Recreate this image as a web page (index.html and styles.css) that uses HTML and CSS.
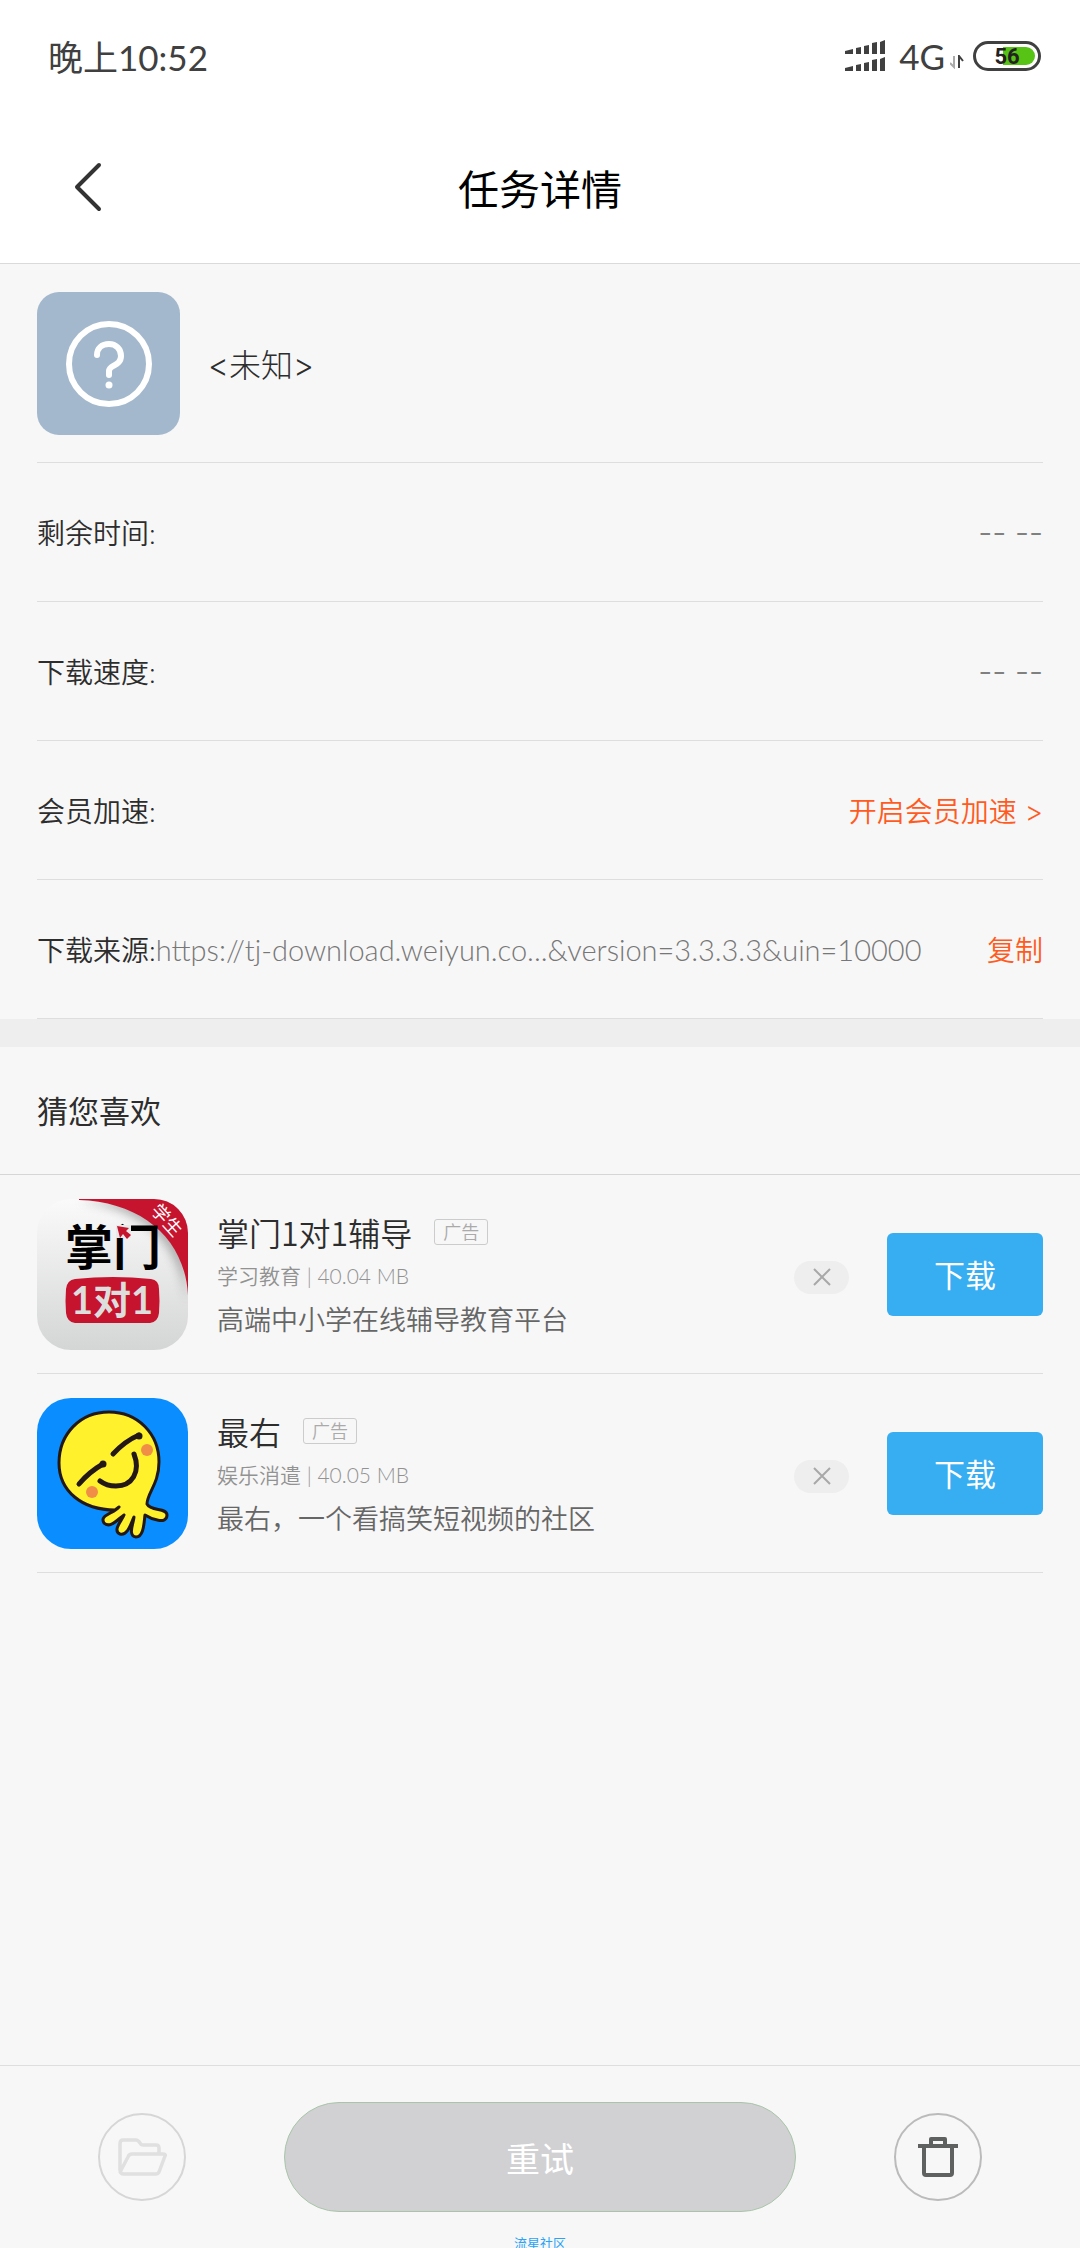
FILE: index.html
```html
<!DOCTYPE html>
<html lang="zh-CN">
<head>
    <meta charset="UTF-8">
    <meta name="viewport" content="width=device-width, initial-scale=1.0">
    <title>任务详情</title>
    <link rel="stylesheet" href="styles.css">
</head>
<body>
    <div class="status-bar">
        <span class="time">晚上10:52</span>
        <div class="status-icons">
            <svg class="signal" width="41" height="32" viewBox="0 0 41 32" fill="#404040">
                <path d="M0 11l8-2v5H0zM11 8l5-1v7h-5zM19 6l5-1v9h-5zM27 3l5-1v12h-5zM35 2l5-2v14h-5z"/>
                <path d="M0 28l8-2v5H0zM11 25l5-1v7h-5zM19 23l5-1v9h-5zM27 20l5-1v12h-5zM35 19l5-2v14h-5z"/>
            </svg>
            <span class="network">4G</span>
            <svg class="arrows" width="14" height="14" viewBox="0 0 14 14" fill="none" stroke-width="2">
                <path d="M4 1v11L0 8" stroke="#aaa"/>
                <path d="M9 13V1l4 5" stroke="#404040"/>
            </svg>
            <svg class="battery" width="68" height="30" viewBox="0 0 68 30">
                <rect x="1.5" y="1.5" width="65" height="27" rx="13.5" fill="#fff" stroke="#404040" stroke-width="3"/>
                <path d="M30 6h23a9 9 0 0 1 0 18H30z" fill="#57c314"/>
                <text x="34" y="23" text-anchor="middle">56</text>
            </svg>
        </div>
    </div>
    <header class="header">
        <button class="back" aria-label="返回">
            <svg width="28" height="50" viewBox="0 0 28 50" fill="none" stroke="#333" stroke-width="4" stroke-linecap="round" stroke-linejoin="round">
                <path d="M25 3L3 25l22 22"/>
            </svg>
        </button>
        <h1>任务详情</h1>
    </header>

    <main>
        <section class="details">
            <div class="file">
                <svg width="143" height="143" viewBox="0 0 143 143" fill="none" stroke="#fff" stroke-linecap="round">
                    <rect width="143" height="143" rx="22" fill="#a3b8cc" stroke="none"/>
                    <circle cx="72" cy="72" r="40" stroke-width="6"/>
                    <path d="M60 63c0-7 5-11 12-11s12 5 12 12c0 10-12 9-12 15v4" stroke-width="6"/>
                    <circle cx="72" cy="93" r="3.5" fill="#fff" stroke="none"/>
                </svg>
                <span class="file-name">&lt;未知&gt;</span>
            </div>
            <div class="row">
                <span class="label">剩余时间:</span>
                <span class="value">-- --</span>
            </div>
            <div class="row">
                <span class="label">下载速度:</span>
                <span class="value">-- --</span>
            </div>
            <div class="row">
                <span class="label">会员加速:</span>
                <a href="#" class="link">开启会员加速 &gt;</a>
            </div>
            <div class="row">
                <span class="label">下载来源:</span>
                <span class="url">https://tj-download.weiyun.co...&amp;version=3.3.3.3&amp;uin=10000</span>
                <button class="link">复制</button>
            </div>
        </section>

        <h2 class="section-title">猜您喜欢</h2>
        <ul class="apps">
            <li class="app">
                <svg class="app-icon" width="151" height="151" viewBox="0 0 151 151">
                    <defs>
                        <linearGradient id="silver" x1="0" y1="0" x2="0" y2="1">
                            <stop offset="0" stop-color="#fafafa"/>
                            <stop offset="1" stop-color="#d4d6d5"/>
                        </linearGradient>
                        <filter id="shade" x="-20%" y="-20%" width="140%" height="140%">
                            <feGaussianBlur stdDeviation="5"/>
                        </filter>
                    </defs>
                    <rect width="151" height="151" fill="url(#silver)"/>
                    <path d="M42 3C100 8 142 40 149 103L151 0z" fill="#888" opacity=".6" filter="url(#shade)"/>
                    <path d="M42 1C105 3 148 40 151 96V0H42z" fill="#c6142f"/>
                    <text class="ribbon" x="0" y="0" transform="translate(113 12) rotate(48)">学生</text>
                    <text class="logo" x="76" y="66" text-anchor="middle">掌门</text>
                    <path d="M79 26h15v13H79z" fill="#e8e9e9"/>
                    <path d="M80 27l12 2-3 3 5 4-4 4-4-5-3 4z" fill="#c6142f"/>
                    <path d="M38 80q38-4 76 0 8 1 8 10 1 12 0 24-1 9-9 10H38q-8-1-9-10-1-12 0-24 1-9 9-10z" fill="#c6142f"/>
                    <text class="badge" x="75" y="115" text-anchor="middle">1对1</text>
                </svg>
                <div class="app-info">
                    <div class="app-title">
                        <h3>掌门1对1辅导</h3>
                        <span class="tag">广告</span>
                    </div>
                    <p class="meta">学习教育 | 40.04 MB</p>
                    <p class="desc">高端中小学在线辅导教育平台</p>
                </div>
                <button class="dismiss" aria-label="关闭">
                    <svg width="18" height="18" viewBox="0 0 18 18" stroke="#a8a8a8" stroke-width="2"><path d="M1 1l16 16M17 1L1 17"/></svg>
                </button>
                <button class="download">下载</button>
            </li>
            <li class="app">
                <svg class="app-icon" width="151" height="151" viewBox="0 0 151 151" stroke-linecap="round" stroke-linejoin="round">
                    <rect width="151" height="151" fill="#0a8eff"/>
                    <path d="M78 112C45 112 22 93 22 65 22 36 43 14 72 14s50 22 50 50c0 22-12 31-12 42 4 8 20 3 20 11 0 10-16 4-22 0-1 7-1 22-9 22-9-1-2-15-2-20-3 6-6 19-14 17-8-3 2-14 4-19-6 4-14 14-20 8-5-8 9-9 15-16z" fill="#fff22d" stroke="#231815" stroke-width="3"/>
                    <g fill="none" stroke="#231815" stroke-width="5">
                        <path d="M42 86q10-12 24-20M76 56q12-13 26-19"/>
                        <path d="M97 56c7 18-2 32-18 32-7 0-12-2-16-5"/>
                    </g>
                    <circle cx="66" cy="66" r="3.5" fill="#231815"/>
                    <circle cx="102" cy="38" r="3.5" fill="#231815"/>
                    <circle cx="55" cy="94" r="6" fill="#f08e48"/>
                    <circle cx="110" cy="52" r="6" fill="#f08e48"/>
                </svg>
                <div class="app-info">
                    <div class="app-title">
                        <h3>最右</h3>
                        <span class="tag">广告</span>
                    </div>
                    <p class="meta">娱乐消遣 | 40.05 MB</p>
                    <p class="desc">最右，一个看搞笑短视频的社区</p>
                </div>
                <button class="dismiss" aria-label="关闭">
                    <svg width="18" height="18" viewBox="0 0 18 18" stroke="#a8a8a8" stroke-width="2"><path d="M1 1l16 16M17 1L1 17"/></svg>
                </button>
                <button class="download">下载</button>
            </li>
        </ul>
    </main>

    <footer class="footer">
        <div class="actions">
            <button class="round" disabled aria-label="打开文件夹">
                <svg width="50" height="40" viewBox="0 0 50 40" fill="none" stroke="#e0e0e0" stroke-width="3.5" stroke-linejoin="round">
                    <path d="M42 17v-6q0-3-3-3H26q-2 0-3-2-2-3-4-3H6Q3 3 3 7v26q0 4 4 4h32q2 0 3-2l6-16q1-2-2-2H15q-3 0-4 3L3 35"/>
                </svg>
            </button>
            <button class="retry">重试</button>
            <button class="round delete" aria-label="删除">
                <svg width="40" height="40" viewBox="0 0 40 40" fill="none" stroke="#5f6060" stroke-width="4" stroke-linejoin="round">
                    <path d="M0 9h40M6 9v27q0 2 2 2h24q2 0 2-2V9M13 9V2h14v7"/>
                </svg>
            </button>
        </div>
        <a href="#" class="community">流星社区</a>
    </footer>
</body>
</html>
```
FILE: styles.css
```css
* {
    box-sizing: border-box;
}
body {
    display: flex;
    flex-direction: column;
    height: 100vh;
    margin: 0;
    overflow: hidden;
    background-color: #f7f7f7;
    color: #2d2d2d;
    font-family: Lato, 'Noto Sans CJK SC', sans-serif;
    font-weight: 350;
}
h1, h2, h3, p, ul {
    margin: 0;
    padding: 0;
    font-weight: inherit;
}
button {
    padding: 0;
    border: none;
    background: none;
    font: inherit;
    cursor: pointer;
}
svg {
    display: block;
    flex: none;
}
.status-bar {
    display: flex;
    align-items: center;
    justify-content: space-between;
    flex: none;
    height: 113px;
    padding: 0 39px 2px 48px;
    background-color: #fff;
    color: #404040;
}
.time {
    font-size: 35px;
    font-weight: 400;
}
.status-icons {
    display: flex;
    align-items: center;
}
.network {
    margin: 0 5px 0 13px;
    font-size: 35px;
    font-weight: 400;
}
.arrows {
    align-self: flex-end;
    margin: 0 9px 8px 0;
}
.battery text {
    fill: #222;
    font: 700 22px Roboto, sans-serif;
}
.header {
    display: grid;
    grid-template-columns: 102px 1fr 102px;
    align-items: center;
    flex: none;
    height: 151px;
    padding-bottom: 2px;
    background-color: #fff;
    border-bottom: 1px solid #dadada;
}
.back {
    justify-self: end;
}
h1 {
    color: #000;
    font-size: 41px;
    font-weight: 400;
    text-align: center;
}
main {
    flex: 1;
}
.details {
    padding: 0 37px;
    border-bottom: 28px solid #eee;
}
.file {
    display: flex;
    align-items: center;
    gap: 28px;
    height: 199px;
    border-bottom: 1px solid #dedede;
}
.file-name {
    font-family: Inter, 'Noto Sans CJK SC', sans-serif;
    font-size: 32px;
    font-weight: 300;
}
.row {
    display: flex;
    align-items: center;
    height: 139px;
    border-bottom: 1px solid #dedede;
    font-size: 28px;
}
.value, .link {
    margin-left: auto;
}
.value {
    color: #808080;
    font-family: Inter, sans-serif;
    font-size: 31px;
}
.url {
    color: #777;
    font-size: 29px;
}
.link {
    color: #ff5b1f;
    font-family: Inter, 'Noto Sans CJK SC', sans-serif;
    text-decoration: none;
}
.section-title {
    height: 128px;
    padding-left: 37px;
    border-bottom: 1px solid #d6d6d6;
    font-size: 31px;
    font-weight: 400;
    line-height: 128px;
}
.apps {
    padding: 0 37px;
    list-style: none;
}
.app {
    display: flex;
    align-items: center;
    height: 199px;
    border-bottom: 1px solid #dedede;
}
.app-icon {
    border-radius: 34px;
}
.ribbon {
    fill: #fff;
    font-size: 18px;
    font-weight: 400;
}
.logo {
    fill: #000;
    font-size: 48px;
    font-weight: 700;
}
.badge {
    fill: #dcdedd;
    font-size: 38px;
    font-weight: 700;
}
.app-info {
    flex: 1;
    margin-left: 29px;
    padding-top: 4px;
    line-height: 44px;
}
.app-title {
    display: flex;
    align-items: center;
    gap: 22px;
}
h3 {
    font-family: 'Noto Sans CJK SC', sans-serif;
    font-size: 32px;
}
.tag {
    width: 54px;
    height: 26px;
    border: 1px solid #ccc;
    border-radius: 3px;
    color: #aaa;
    font-size: 18px;
    line-height: 24px;
    text-align: center;
}
.meta {
    color: #929292;
    font-size: 21px;
}
.desc {
    color: #666;
    font-size: 27px;
}
.dismiss {
    display: flex;
    align-items: center;
    justify-content: center;
    width: 55px;
    height: 33px;
    margin: 6px 38px 0 0;
    border-radius: 17px;
    background-color: #eee;
}
.download {
    width: 156px;
    height: 83px;
    padding-bottom: 2px;
    border-radius: 6px;
    background-color: #37adf2;
    color: #fff;
    font-size: 31px;
    font-weight: 400;
}
.footer {
    flex: none;
    height: 183px;
    padding-top: 36px;
    border-top: 1px solid #dedede;
    text-align: center;
}
.actions {
    display: grid;
    grid-template-columns: 1fr minmax(0, 512px) 1fr;
    align-items: center;
    justify-items: center;
}
.round {
    display: flex;
    align-items: center;
    justify-content: center;
    width: 88px;
    height: 88px;
    border: 2px solid #d6d6d6;
    border-radius: 50%;
}
.delete {
    border-color: #bbb;
}
.retry {
    width: 100%;
    height: 110px;
    border: 1px solid #a9c5a9;
    border-radius: 55px;
    background-color: #d1d1d3;
    color: #fff;
    font-size: 34px;
    font-weight: 400;
}
.community {
    display: block;
    margin-top: 22px;
    color: #2ba2f5;
    font-size: 13px;
    font-weight: 400;
    line-height: 18px;
    text-decoration: none;
}
```
